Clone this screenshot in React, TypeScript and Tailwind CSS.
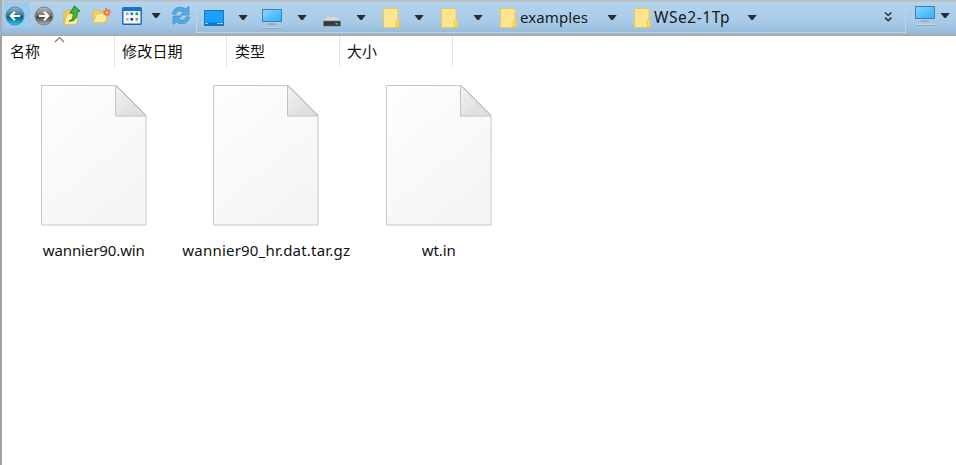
import React from "react";

type IconProps = { w: number; className?: string; children: React.ReactNode };

function Icon({ w, className = "", children }: IconProps) {
  return (
    <svg width={w} height={32} viewBox={`0 0 ${w} 32`} className={`block shrink-0 ${className}`}>
      {children}
    </svg>
  );
}

function Caret({ className = "", y = 15 }: { className?: string; y?: number }) {
  return (
    <Icon w={10} className={className}>
      <path d={`M.5 ${y}H9.7L5.9 ${y + 5}H4.3Z`} fill="#2a2c2f" />
    </Icon>
  );
}

function NavIcon({ back = false, className = "" }: { back?: boolean; className?: string }) {
  const id = back ? "nav-back" : "nav-forward";
  return (
    <Icon w={20} className={className}>
      <defs>
        <linearGradient id={id} x1="0" y1="0" x2="0" y2="1">
          <stop offset="0" stopColor={back ? "#9ab6c5" : "#b8b8b8"} />
          <stop offset=".45" stopColor={back ? "#397a9d" : "#777"} />
          <stop offset=".55" stopColor={back ? "#07608f" : "#454545"} />
          <stop offset="1" stopColor={back ? "#25cbf2" : "#b5b5b5"} />
        </linearGradient>
      </defs>
      <circle cx="10" cy="16" r="9" fill={`url(#${id})`} stroke={back ? "#5688a3" : "#808386"} strokeWidth="1" />
      <path
        d={back ? "M15 16H6.5M10 11.8 5.8 16l4.2 4.2" : "M5 16h8.5M10 11.8l4.2 4.2-4.2 4.2"}
        fill="none" stroke="#fff" strokeWidth="2.1"
      />
    </Icon>
  );
}

function FolderUp({ className = "" }: { className?: string }) {
  return (
    <Icon w={20} className={className}>
      <path d="M2 25V12l2-2h4l1 2h6v11Z" fill="#f1cb62" stroke="#dcae40" strokeWidth=".8" />
      <path d="M2 25 5 14l11-1-1 11Z" fill="#ffec9a" stroke="#e0b451" strokeWidth=".8" />
      <path d="M7 21c4-1 4.5-4 4-8H8l4.5-7L18 11l-3 .8c1 5-2 10-8 9.2Z" fill="#42b936" stroke="#168222" strokeWidth="1" />
    </Icon>
  );
}

function FolderNew({ className = "" }: { className?: string }) {
  return (
    <Icon w={21} className={className}>
      <path d="M2 23V11l1-1h5l1 2h7v10Z" fill="#f4ce67" stroke="#e1b14d" strokeWidth=".8" />
      <path d="m2 23 3.5-9L17 13l-2.5 9Z" fill="#ffeb99" stroke="#e6bb58" strokeWidth=".8" />
      <path d="m15.5 8 1.2 2 2.2-1-.3 2.3 1.8 1.3-2 1 .4 2.4-2.2-.9-1.4 1.9-.9-2.2-2.3.2 1.2-2-1.4-1.7 2.3-.5v-2.2Z" fill="#f26a42" />
      <circle cx="16" cy="12.5" r="1.7" fill="#ffb546" />
    </Icon>
  );
}

function ViewGrid({ className = "" }: { className?: string }) {
  return (
    <Icon w={20} className={className}>
      <rect x=".8" y="7.7" width="18.4" height="16.5" rx="1" fill="#f3faff" stroke="#1267bd" strokeWidth="1.4" />
      <path d="M1 7h18v4H1Z" fill="#1276d9" />
      <path d="M4 12.5h2.6v2.6H4Z" fill="#9aa4c4" /><path d="M8.5 12.5h2.6v2.6H8.5Z" fill="#3572d2" />
      <path d="M13.5 12.5h2.6v2.6h-2.6Z" fill="#28a338" /><path d="M4 18h2.6v2.6H4Z" fill="#f19779" />
      <path d="M8.5 18h2.6v2.6H8.5Z" fill="#173f9d" /><path d="M13.5 18h2.6v2.6h-2.6Z" fill="#b98a27" />
    </Icon>
  );
}

function Refresh({ className = "" }: { className?: string }) {
  return (
    <Icon w={20} className={className}>
      <g fill="#55a8e2" stroke="#388ccf" strokeWidth=".7">
        <path d="M1.5 14C2 8 9 5 14.5 9L18 6.5V15H9.8l2.5-2.7C9 10 5.5 10.5 5 14Z" />
        <path d="M18.5 17C18 23 11 26 5.5 22L2 24.5V16h8.2l-2.5 2.7c3.3 2.3 6.8 1.8 7.3-1.7Z" />
      </g>
    </Icon>
  );
}

function Desktop({ className = "" }: { className?: string }) {
  return (
    <Icon w={20} className={className}>
      <rect x=".5" y="10.5" width="19" height="15" fill="#14a1ff" stroke="#2377ae" />
      <path d="M1 22.5h18V25H1Z" fill="#087bd0" />
      <path d="M1.5 23.5h2m10 0h2m1 0h2" stroke="#d8f4ff" />
    </Icon>
  );
}

function Monitor({ className = "", y = 9 }: { className?: string; y?: number }) {
  return (
    <Icon w={20} className={className}>
      <defs>
        <linearGradient id={`screen-${y}`} x1="0" y1="0" x2="1" y2="1">
          <stop stopColor="#86d7ff" /><stop offset=".45" stopColor="#5dc4ff" /><stop offset="1" stopColor="#31aefe" />
        </linearGradient>
      </defs>
      <g transform={`translate(0 ${y - 6})`}>
        <rect x=".5" y="6.5" width="19" height="12" fill={`url(#screen-${y})`} stroke="#427fa5" />
        <path d="M7 20h6v1h2v1H5v-1h2Z" fill="#9bafc0" />
        <path d="M0 24h20v1H0Z" fill="#c5d2de" /><path d="M0 25h20v.7H0Z" fill="#8f9dac" />
      </g>
    </Icon>
  );
}

function Drive({ className = "" }: { className?: string }) {
  return (
    <Icon w={18} className={className}>
      <path d="m4 17.3 10 0 3.5 4.2H.5Z" fill="#d6d8da" />
      <path d="M1 21h16l.5 1v4H.5v-4Z" fill="#383b3e" stroke="#66696c" strokeWidth=".6" />
      <path d="M12.5 23h2v1.5h-2Z" fill="#39e354" />
    </Icon>
  );
}

function Folder({ className = "" }: { className?: string }) {
  return (
    <Icon w={17} className={className}>
      <path d="M.6 8.5H15v11.2l1.2.8v7H.6Z" fill="#ffe490" stroke="#e8c763" />
      <path d="M13.3 27v-6.2l1-1h1.8V27Z" fill="#ffdc70" stroke="#e6bd46" strokeWidth=".8" />
    </Icon>
  );
}

function Toolbar() {
  return (
    <header className="flex h-9 border-b-2 border-[#aaabad] bg-[linear-gradient(to_bottom,#bcbfc1_0px,#bcbfc1_1px,#b4d3eb_2px,#a6cae7_23px,#94b9d9_34px)]">
      <div className="flex w-[196px] border-l-2 border-[#a7adb3] pl-0.5">
        <div className="mr-[-1px] mt-0.5 h-[26px] w-[26px] bg-[#9dcbef]">
          <NavIcon back className="-mt-0.5 ml-[1px]" />
        </div>
        <NavIcon className="ml-[5px]" />
        <FolderUp className="ml-2" />
        <FolderNew className="ml-[9px]" />
        <ViewGrid className="ml-[10px]" />
        <Caret y={13} className="ml-[9px]" />
        <Refresh className="ml-[10px]" />
      </div>
      <div className="mt-1 flex h-[29px] w-[710px] border-x border-b border-[#bfd4e7] pl-[7px]">
        <div className="-mt-1 flex text-[15px] leading-8 text-[#17191c]">
          <Desktop />
          <Caret className="ml-[14px]" />
          <Monitor className="ml-[14px]" />
          <Caret className="ml-[15px]" />
          <Drive className="ml-4" />
          <Caret className="ml-[15px]" />
          <Folder className="ml-[17px]" />
          <Caret className="ml-[14px]" />
          <Folder className="ml-[17px]" />
          <Caret className="ml-[15px]" />
          <Folder className="ml-[17px]" />
          <span className="ml-[3px] mt-px w-[68px] whitespace-nowrap tracking-[0.1px]">examples</span>
          <Caret className="ml-[19px]" />
          <Folder className="ml-[17px]" />
          <span className="ml-[3px] mt-px w-[77px] whitespace-nowrap text-[15.5px] tracking-[0.55px]">WSe2-1Tp</span>
          <Caret className="ml-4" />
          <Icon w={10} className="ml-[126px]">
            <path d="m2 12.5 3.2 3 3.2-3m-6.4 5.2 3.2 3 3.2-3" fill="none" stroke="#303438" strokeWidth="1.6" />
          </Icon>
        </div>
      </div>
      <Monitor y={6} className="ml-[9px]" />
      <Caret y={13} className="ml-[5px]" />
    </header>
  );
}

function Columns() {
  return (
    <div className="flex h-[31px] text-[15px] leading-[31px] text-[#111]">
      <div className="relative w-[113px] border-r border-[#e2e2e2] pl-2">
        名称
        <svg className="absolute left-[52px] top-0" width="11" height="7" viewBox="0 0 11 7">
          <path d="m1 6 4.5-4.5L10 6" fill="none" stroke="#777" strokeWidth="1.1" />
        </svg>
      </div>
      <div className="w-28 border-r border-[#e2e2e2] pl-[7px] tracking-[0.2px]">修改日期</div>
      <div className="w-[113px] border-r border-[#e2e2e2] pl-2">类型</div>
      <div className="w-[113px] border-r border-[#e2e2e2] pl-[7px]">大小</div>
    </div>
  );
}

function FileItem({ name, tracking }: { name: string; tracking: string }) {
  return (
    <div className="flex w-[172.5px] flex-col items-center">
      <svg width="106" height="141" viewBox="0 0 106 141">
        <defs>
          <linearGradient id="paper" x1="0" y1="0" x2=".6" y2="1">
            <stop stopColor="#fdfefe" /><stop offset="1" stopColor="#f3f5f7" />
          </linearGradient>
          <linearGradient id="fold" x1="0" y1="0" x2="1" y2="1">
            <stop stopColor="#f4f4f4" /><stop offset=".65" stopColor="#e0e0e0" />
          </linearGradient>
        </defs>
        <path d="M.5.5h75L105 30v110H.5Z" fill="url(#paper)" stroke="#c6c9c9" />
        <path d="M74.5 .5V31h30.5Z" fill="url(#fold)" stroke="#c2c3c3" />
      </svg>
      <span className={`mt-[14px] whitespace-nowrap text-[15px] leading-5 text-[#111] ${tracking}`}>{name}</span>
    </div>
  );
}

export default function App() {
  return (
    <div className="h-[465px] w-[956px] overflow-hidden bg-white font-['Noto_Sans','Noto_Sans_CJK_SC',sans-serif]">
      <Toolbar />
      <main className="h-[429px] border-l-2 border-[#a0a0a0]">
        <Columns />
        <div className="flex pl-[5.5px] pt-[18px]">
          <FileItem name="wannier90.win" tracking="tracking-[-0.1px]" />
          <FileItem name="wannier90_hr.dat.tar.gz" tracking="tracking-[0.2px]" />
          <FileItem name="wt.in" tracking="tracking-[-0.1px]" />
        </div>
      </main>
    </div>
  );
}
